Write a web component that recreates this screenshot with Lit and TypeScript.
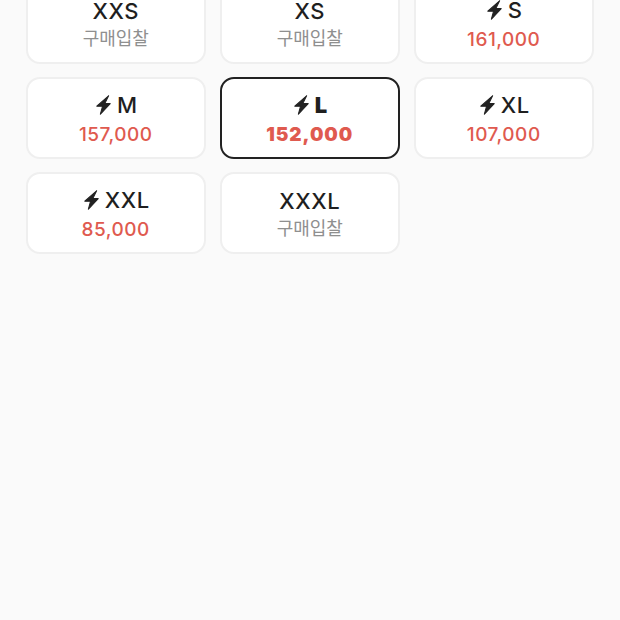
import { LitElement, html, css } from "lit";
import { customElement } from "lit/decorators.js";

type SizeOption = { size: string; price: string | null; fast?: boolean; selected?: boolean };

const SIZES: SizeOption[] = [
  { size: "XXS", price: null },
  { size: "XS", price: null },
  { size: "S", price: "161,000", fast: true },
  { size: "M", price: "157,000", fast: true },
  { size: "L", price: "152,000", fast: true, selected: true },
  { size: "XL", price: "107,000", fast: true },
  { size: "XXL", price: "85,000", fast: true },
  { size: "XXXL", price: null },
];

@customElement("app-root")
export class AppRoot extends LitElement {
  static styles = css`
    :host {
      display: block;
      height: 620px;
      overflow: hidden;
      background: #fafafa;
      font-family: Inter, "Noto Sans CJK KR", sans-serif;
    }

    .grid {
      display: grid;
      grid-template-columns: repeat(3, 1fr);
      gap: 13.5px;
      margin-top: -18px;
      padding: 0 26px 0 25.5px;
    }

    .card {
      box-sizing: border-box;
      height: 81.5px;
      display: flex;
      flex-direction: column;
      align-items: center;
      justify-content: center;
      gap: 5px;
      padding-top: 3px;
      background: #fff;
      border: 2px solid #efefef;
      border-radius: 14px;
    }

    .card.selected {
      border-color: #222;
    }

    .size {
      display: flex;
      align-items: center;
      height: 27px;
      font-size: 22px;
      font-weight: 500;
      letter-spacing: 0.6px;
      color: #1f1f1f;
    }

    .selected .size {
      font-weight: 900;
    }

    .bolt {
      width: 15px;
      height: 20px;
      margin: 0 6px 0 2px;
      fill: #222;
      stroke: #222;
      stroke-width: 1.1;
      stroke-linejoin: round;
    }

    .price {
      font-size: 19px;
      line-height: 24px;
      font-weight: 500;
      letter-spacing: 0.5px;
      color: #df5a4f;
    }

    .selected .price {
      font-weight: 900;
      letter-spacing: 0.9px;
    }

    .bid {
      margin-top: -2px;
      font-size: 18px;
      line-height: 24px;
      color: #8f8f8f;
    }
  `;

  renderCard(item: SizeOption) {
    return html`
      <div class="card ${item.selected ? "selected" : ""}">
        <div class="size">
          ${item.fast
            ? html`<svg class="bolt" viewBox="0 0 15 20">
                <path d="M12.6 .8 .8 11.2H6.6L4.4 19.2 14.2 8.6H8.8z" />
              </svg>`
            : null}
          <span>${item.size}</span>
        </div>
        ${item.price
          ? html`<div class="price">${item.price}</div>`
          : html`<div class="bid">구매입찰</div>`}
      </div>
    `;
  }

  render() {
    return html`<div class="grid">${SIZES.map((s) => this.renderCard(s))}</div>`;
  }
}
